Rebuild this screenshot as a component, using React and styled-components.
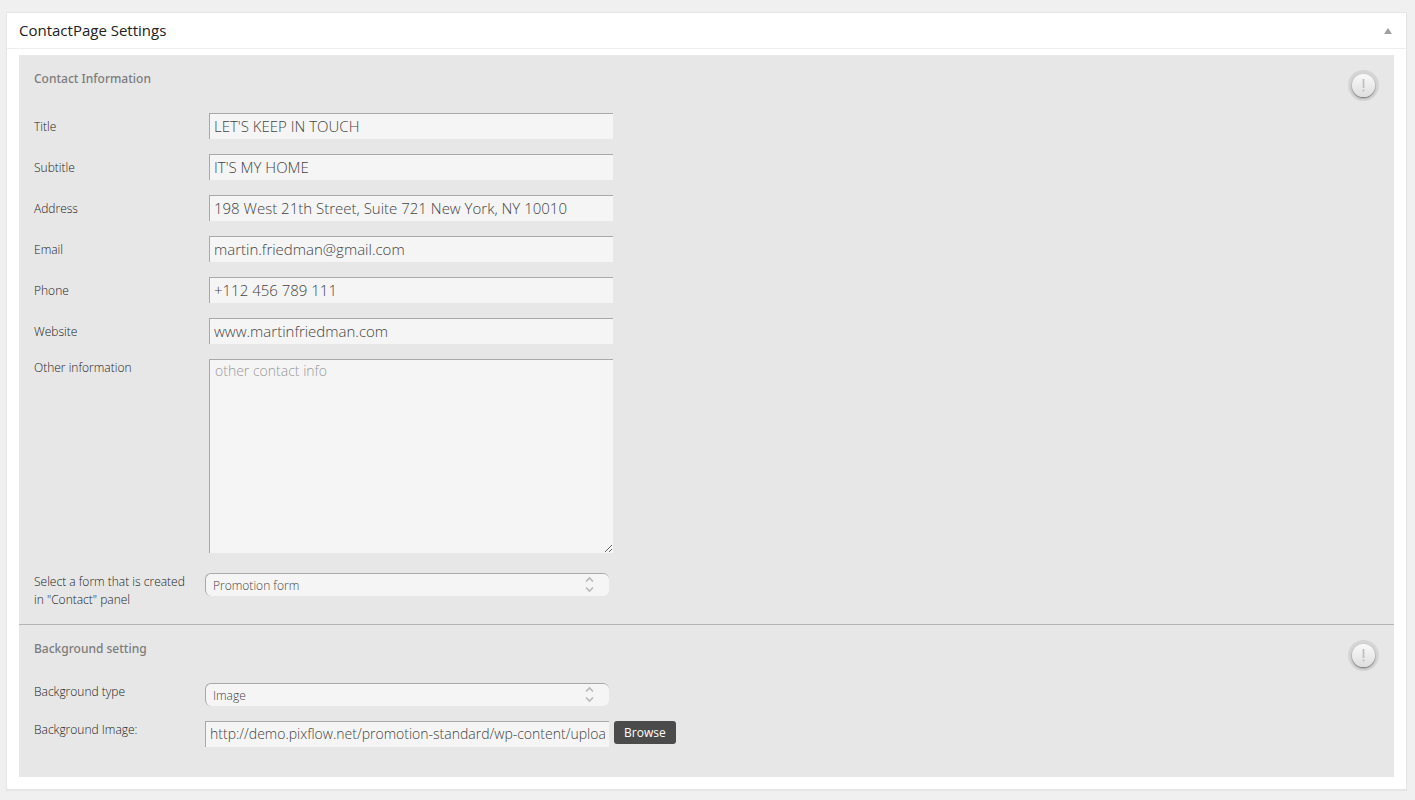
import React, { useState } from "react";
import styled, { createGlobalStyle } from "styled-components";

const Colors = {
  page: "#f0f0f0",
  panel: "#e7e7e7",
  field: "#f5f5f5",
  edge: "#a9a9a9",
  label: "#222",
  value: "#444",
};

const contactFields = [
  { id: "title", label: "Title", value: "LET'S KEEP IN TOUCH" },
  { id: "subtitle", label: "Subtitle", value: "IT'S MY HOME" },
  {
    id: "address",
    label: "Address",
    value: "198 West 21th Street, Suite 721 New York, NY 10010",
  },
  { id: "email", label: "Email", value: "martin.friedman@gmail.com" },
  { id: "phone", label: "Phone", value: "+112 456 789 111" },
  { id: "website", label: "Website", value: "www.martinfriedman.com" },
];

const SelectField = ({ id, options }) => (
  <SelectWrapper>
    <Select id={id} defaultValue={options[0]}>
      {options.map((option) => (
        <option key={option}>{option}</option>
      ))}
    </Select>
    <Arrows viewBox="0 0 9 17" aria-hidden="true">
      <path d="M1 5.5L4.5 2L8 5.5M1 11.5L4.5 15L8 11.5" />
    </Arrows>
  </SelectWrapper>
);

const Help = () => (
  <HelpButton type="button" aria-label="Help">
    <svg viewBox="0 0 23 23" aria-hidden="true">
      <path d="M11.5 5V14M11.5 15.5V17.5" />
    </svg>
  </HelpButton>
);

const App = () => {
  const [open, setOpen] = useState(true);
  return (
    <>
      <GlobalStyle />
      <MetaBox>
        <Header>
          <h3>ContactPage Settings</h3>
          <Toggle
            type="button"
            aria-label="Toggle panel"
            onClick={() => setOpen(!open)}
          >
            <svg viewBox="0 0 8 6" aria-hidden="true">
              <path d="M4 0L8 6H0z" />
            </svg>
          </Toggle>
        </Header>
        {open && (
          <Content>
            <Section>
              <SectionHead>
                <h4>Contact Information</h4>
                <Help />
              </SectionHead>
              <Rows>
                {contactFields.map((field) => (
                  <Row key={field.id} $inset>
                    <Label htmlFor={field.id} $centered>
                      {field.label}
                    </Label>
                    <Input id={field.id} type="text" defaultValue={field.value} />
                  </Row>
                ))}
                <Row $inset $last>
                  <Label htmlFor="other">Other information</Label>
                  <TextArea id="other" placeholder="other contact info" />
                </Row>
                <Row>
                  <Label htmlFor="form">
                    Select a form that is created in "Contact" panel
                  </Label>
                  <SelectField id="form" options={["Promotion form"]} />
                </Row>
              </Rows>
            </Section>
            <Section $tall>
              <SectionHead>
                <h4>Background setting</h4>
                <Help />
              </SectionHead>
              <Rows>
                <Row>
                  <Label htmlFor="bgType">Background type</Label>
                  <SelectField id="bgType" options={["Image"]} />
                </Row>
                <Row>
                  <Label htmlFor="bgImage">Background Image:</Label>
                  <Input
                    id="bgImage"
                    type="text"
                    $small
                    defaultValue="http://demo.pixflow.net/promotion-standard/wp-content/uploads/background.jpg"
                  />
                  <Browse type="button">Browse</Browse>
                </Row>
              </Rows>
            </Section>
          </Content>
        )}
      </MetaBox>
    </>
  );
};

export default App;

const GlobalStyle = createGlobalStyle`
  * {
    box-sizing: border-box;
  }
  body {
    margin: 0;
    padding: 12px 8px 9px 6px;
    background: ${Colors.page};
    font-family: "Open Sans", sans-serif;
  }
  h3, h4 {
    margin: 0;
  }
  button, input, select, textarea {
    font-family: inherit;
    margin: 0;
  }
`;

const MetaBox = styled.div`
  background: #fff;
  border: 1px solid #e5e5e5;
  box-shadow: 0 1px 1px rgba(0, 0, 0, 0.04);
`;

const Header = styled.div`
  display: flex;
  align-items: center;
  justify-content: space-between;
  height: 36px;
  padding: 0 12px;
  border-bottom: 1px solid #eee;

  h3 {
    padding-bottom: 2px;
    font-size: 15px;
    font-weight: 400;
    line-height: 20px;
    color: #222;
  }
`;

const Toggle = styled.button`
  display: flex;
  padding: 2px;
  border: none;
  background: none;
  cursor: pointer;

  svg {
    width: 8px;
    height: 6px;
    fill: #a0a0a0;
  }
`;

const Content = styled.div`
  padding: 6px 12px 12px;
`;

const Section = styled.section`
  padding: 15px 15px ${({ $tall }) => ($tall ? "30px" : "15px")};
  background: ${Colors.panel};

  & + & {
    border-top: 1px solid #b4b4b4;
  }
`;

const SectionHead = styled.div`
  display: flex;
  align-items: flex-start;
  justify-content: space-between;
  margin-bottom: 12px;

  h4 {
    font-family: "Noto Sans", sans-serif;
    font-size: 12px;
    font-weight: 500;
    line-height: 18px;
    color: #7c7c7c;
  }
`;

const HelpButton = styled.button`
  display: flex;
  width: 31px;
  height: 31px;
  padding: 4px;
  border: none;
  border-radius: 50%;
  background: #d5d5d5;
  cursor: pointer;

  svg {
    width: 23px;
    height: 23px;
    border-radius: 50%;
    background: linear-gradient(#fafafa, #dedede);
    box-shadow: 0 1px 2px rgba(0, 0, 0, 0.5);
    fill: none;
    stroke: #c0c0c0;
    stroke-width: 1.8;
  }
`;

const Rows = styled.div`
  display: flex;
  flex-direction: column;
  gap: 15px;
`;

const Row = styled.div`
  display: flex;
  align-items: flex-start;
  padding-bottom: ${({ $last }) => ($last ? "5px" : "0")};

  label {
    margin-right: ${({ $inset }) => ($inset ? "10px" : "6px")};
  }
`;

const Label = styled.label`
  flex: 0 0 165px;
  padding-top: ${({ $centered }) => ($centered ? "5px" : "0")};
  padding-right: 5px;
  font-size: 12px;
  font-weight: 300;
  line-height: 18px;
  color: ${Colors.label};
`;

const Input = styled.input`
  flex: 0 1 404px;
  min-width: 0;
  height: 26px;
  padding: 0 4px 2px;
  border: solid ${Colors.edge};
  border-width: 1px 0 0 1px;
  border-radius: 0;
  background: ${Colors.field};
  font-size: ${({ $small }) => ($small ? "14px" : "15px")};
  font-weight: 300;
  color: ${Colors.value};
`;

const TextArea = styled.textarea`
  flex: 0 1 404px;
  min-width: 0;
  height: 194px;
  padding: 1px 5px;
  border: solid ${Colors.edge};
  border-width: 1px 0 0 1px;
  background: ${Colors.field};
  font-size: 14px;
  font-weight: 300;
  line-height: 20px;
  color: ${Colors.value};
  resize: both;

  &::placeholder {
    color: #999;
  }
`;

const SelectWrapper = styled.div`
  position: relative;
  display: flex;
  flex: 0 1 404px;
  min-width: 0;
`;

const Select = styled.select`
  width: 100%;
  height: 23px;
  padding: 0 30px 0 7px;
  border: solid ${Colors.edge};
  border-width: 1px 0 0 1px;
  border-radius: 6px;
  background: ${Colors.field};
  font-size: 12px;
  font-weight: 300;
  color: ${Colors.value};
  appearance: none;
`;

const Arrows = styled.svg`
  position: absolute;
  top: 3px;
  right: 15px;
  width: 9px;
  height: 17px;
  fill: none;
  stroke: #b8b8b8;
  stroke-width: 1.6;
  pointer-events: none;
`;

const Browse = styled.button`
  height: 23px;
  margin-left: 5px;
  padding: 0 10px;
  border: none;
  border-radius: 3px;
  background: #4b4b4b;
  font-size: 12px;
  font-weight: 400;
  color: #fff;
  cursor: pointer;
`;
